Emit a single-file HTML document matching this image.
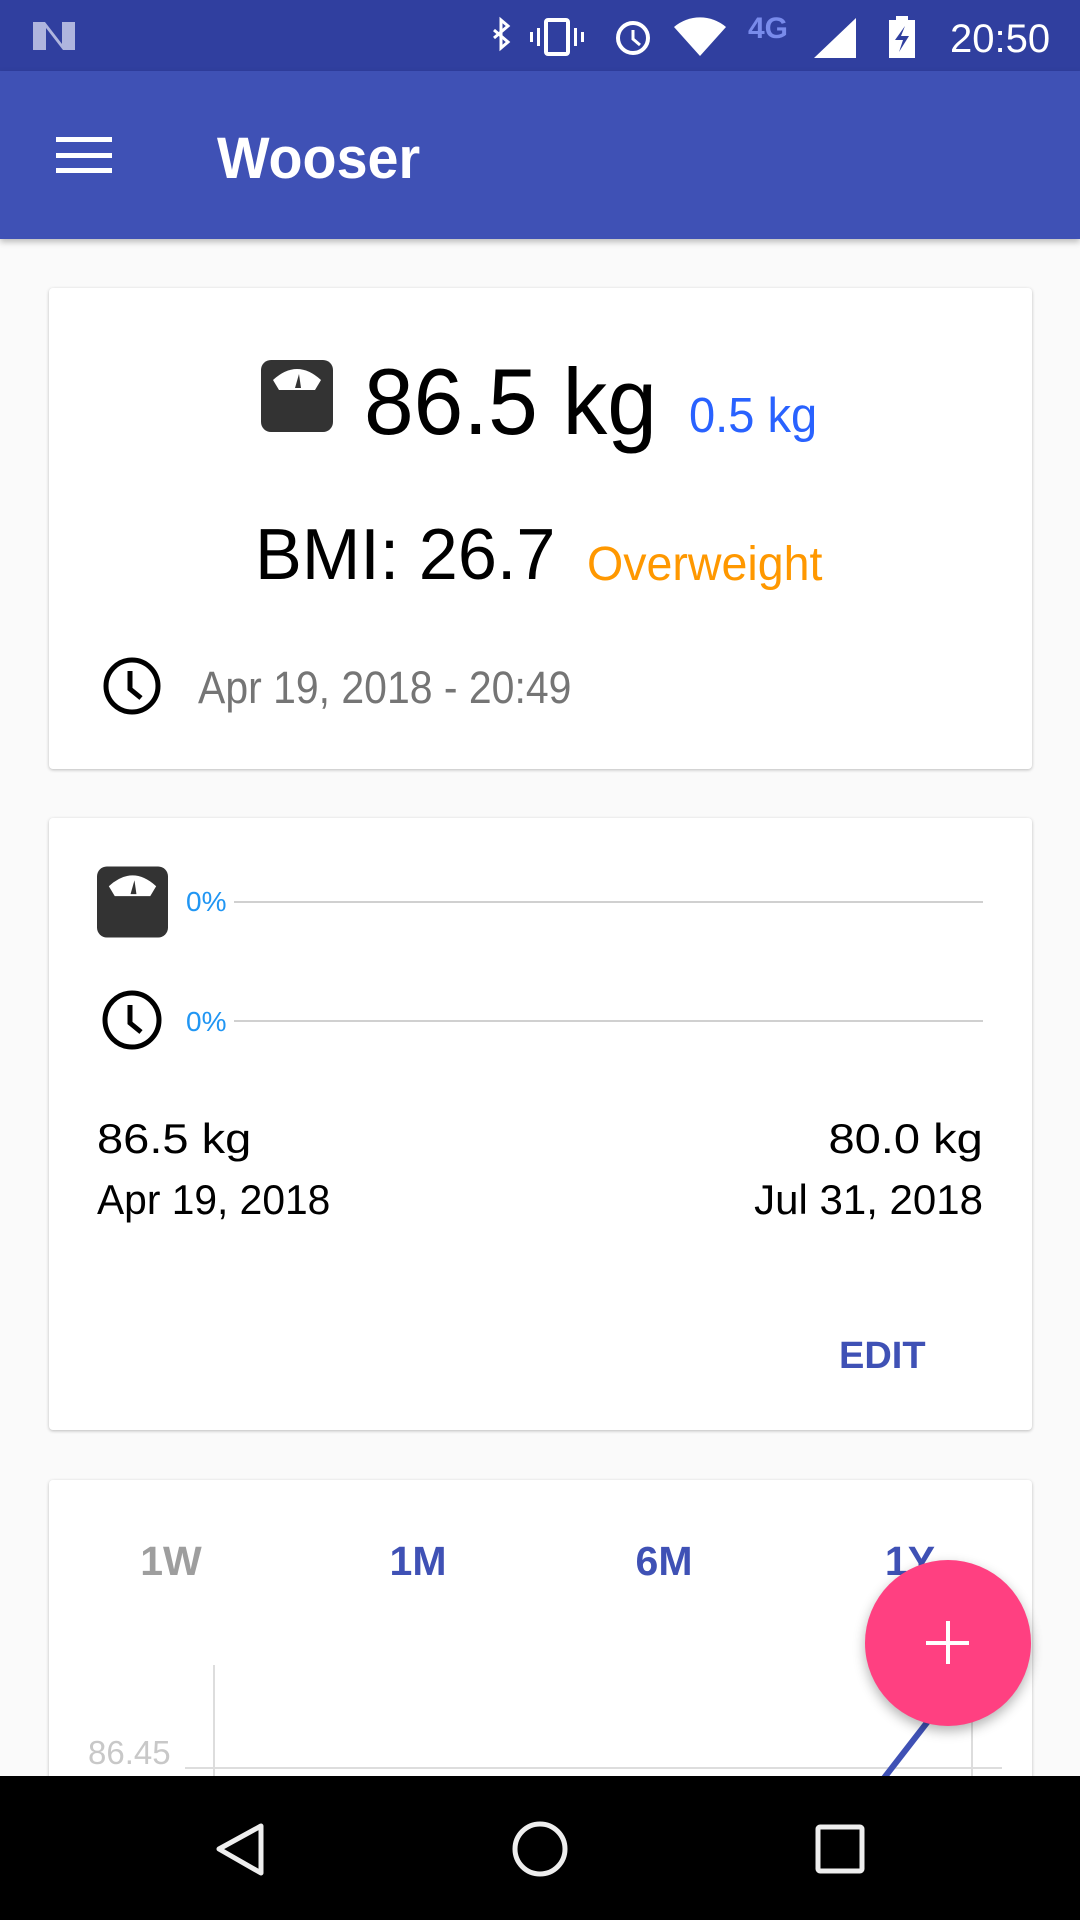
<!DOCTYPE html>
<html><head><meta charset="utf-8"><style>
*{margin:0;padding:0;box-sizing:border-box}
body{width:1080px;height:1920px;position:relative;overflow:hidden;background:#FAFAFA;font-family:"Liberation Sans",sans-serif}
.a{position:absolute;white-space:nowrap}
.card{position:absolute;left:49px;width:983px;background:#fff;border-radius:4px;box-shadow:0 1px 3px rgba(0,0,0,.25)}
</style></head><body>
<div class="a" style="left:0;top:0;width:1080px;height:71px;background:#303F9F"></div>
<div class="a" style="left:0;top:71px;width:1080px;height:168px;background:#3F51B5;box-shadow:0 3px 6px rgba(0,0,0,.25)"></div>
<svg class="a" style="left:0;top:0" width="1080" height="71">
<path d="M33 22 L45 22 L62 44 L62 22 L75 22 L75 50 L63 50 L46 28 L46 50 L33 50Z" fill="#c5cae9" opacity=".85"/>
<path d="M494 30 L508 42 L501 48 L501 20 L508 26 L494 38" stroke="#fff" stroke-width="3" fill="none"/>
<rect x="546" y="20" width="22" height="34" rx="2" stroke="#fff" stroke-width="4" fill="none"/>
<rect x="537" y="28" width="3" height="18" fill="#fff"/><rect x="574" y="28" width="3" height="18" fill="#fff"/>
<rect x="530" y="32" width="3" height="10" fill="#fff"/><rect x="581" y="32" width="3" height="10" fill="#fff"/>
<circle cx="633" cy="38" r="15" stroke="#fff" stroke-width="4" fill="none"/><path d="M633 30 L633 39 L640 45" stroke="#fff" stroke-width="3" fill="none"/>
<path d="M674 27 A40 40 0 0 1 726 27 L700 56Z" fill="#fff"/>
<text x="748" y="38" font-size="30" font-weight="bold" fill="#8c9eff" opacity=".8">4G</text>
<path d="M814 58 L856 58 L856 18Z" fill="#fff"/>
<rect x="889" y="20" width="26" height="38" fill="#fff"/><rect x="896" y="16" width="12" height="5" fill="#fff"/>
<path d="M905 26 L895 40 L903 40 L899 52 L909 36 L901 36Z" fill="#303F9F"/>
<text x="950" y="52" font-size="40" fill="#fff">20:50</text>
</svg>
<div class="a" style="left:56px;top:137px;width:56px;height:5px;background:#fff"></div>
<div class="a" style="left:56px;top:153px;width:56px;height:5px;background:#fff"></div>
<div class="a" style="left:56px;top:168px;width:56px;height:5px;background:#fff"></div>
<div class="a" style="left:217px;top:124px;font-size:58px;line-height:70px;color:#fff;font-weight:bold;transform:scaleX(.96);transform-origin:left">Wooser</div>

<div class="card" style="top:288px;height:481px"></div>
<svg class="a" style="left:261px;top:360px" width="72" height="72" viewBox="0 0 72 72"><rect width="72" height="72" rx="10" fill="#333"/><path d="M12 20 Q36 -2 60 20 L54 30 L18 30Z" fill="#fff"/><path d="M38 14 L34 28 L40 28Z" fill="#333"/></svg>
<div class="a" style="left:364px;top:352px;font-size:94px;line-height:100px;color:#000;transform:scaleX(.95);transform-origin:left">86.5 kg</div>
<div class="a" style="left:689px;top:386px;font-size:49px;line-height:60px;color:#2962FF;transform:scaleX(.96);transform-origin:left">0.5 kg</div>
<div class="a" style="left:255px;top:515px;font-size:72px;line-height:80px;color:#000;transform:scaleX(.975);transform-origin:left">BMI: 26.7</div>
<div class="a" style="left:587px;top:535px;font-size:48px;line-height:60px;color:#FF9800;transform:scaleX(.97);transform-origin:left">Overweight</div>
<svg class="a" style="left:101px;top:656px" width="62" height="60"><circle cx="31" cy="30" r="26" stroke="#000" stroke-width="5" fill="none"/><path d="M29 15 L29 33 L40 42" stroke="#000" stroke-width="5" fill="none"/></svg>
<div class="a" style="left:198px;top:660px;font-size:45px;line-height:56px;color:#757575;transform:scaleX(.91);transform-origin:left">Apr 19, 2018 - 20:49</div>

<div class="card" style="top:818px;height:612px"></div>
<svg class="a" style="left:97px;top:866px" width="71" height="72" viewBox="0 0 72 72"><rect width="72" height="72" rx="10" fill="#333"/><path d="M12 20 Q36 -2 60 20 L54 30 L18 30Z" fill="#fff"/><path d="M38 14 L34 28 L40 28Z" fill="#333"/></svg>
<div class="a" style="left:186px;top:886px;font-size:28px;line-height:32px;color:#2196F3">0%</div>
<div class="a" style="left:234px;top:901px;width:749px;height:2px;background:#d0d0d0"></div>
<svg class="a" style="left:101px;top:989px" width="62" height="62"><circle cx="31" cy="31" r="27" stroke="#000" stroke-width="5" fill="none"/><path d="M29 16 L29 34 L40 43" stroke="#000" stroke-width="5" fill="none"/></svg>
<div class="a" style="left:186px;top:1006px;font-size:28px;line-height:32px;color:#2196F3">0%</div>
<div class="a" style="left:234px;top:1020px;width:749px;height:2px;background:#d0d0d0"></div>
<div class="a" style="left:97px;top:1114px;font-size:42px;line-height:50px;color:#000;transform:scaleX(1.12);transform-origin:left">86.5 kg</div>
<div class="a" style="left:97px;top:1175px;font-size:42px;line-height:50px;color:#000;transform:scaleX(.97);transform-origin:left">Apr 19, 2018</div>
<div class="a" style="right:97px;top:1114px;font-size:42px;line-height:50px;color:#000;transform:scaleX(1.12);transform-origin:right">80.0 kg</div>
<div class="a" style="right:97px;top:1175px;font-size:42px;line-height:50px;color:#000">Jul 31, 2018</div>
<div class="a" style="left:839px;top:1333px;font-size:38px;line-height:46px;color:#3F51B5;font-weight:bold">EDIT</div>

<div class="card" style="top:1480px;height:400px"></div>
<div class="a" style="left:121px;width:100px;text-align:center;top:1536px;font-size:41px;line-height:50px;color:#9E9E9E;font-weight:bold">1W</div>
<div class="a" style="left:368px;width:100px;text-align:center;top:1536px;font-size:41px;line-height:50px;color:#3F51B5;font-weight:bold">1M</div>
<div class="a" style="left:614px;width:100px;text-align:center;top:1536px;font-size:41px;line-height:50px;color:#3F51B5;font-weight:bold">6M</div>
<div class="a" style="left:860px;width:100px;text-align:center;top:1536px;font-size:41px;line-height:50px;color:#3F51B5;font-weight:bold">1Y</div>
<div class="a" style="left:213px;top:1665px;width:2px;height:120px;background:#ddd"></div>
<div class="a" style="left:971px;top:1665px;width:2px;height:120px;background:#ddd"></div>
<div class="a" style="left:185px;top:1767px;width:817px;height:2px;background:#ddd"></div>
<div class="a" style="left:88px;top:1733px;font-size:33px;line-height:40px;color:#c8c8c8">86.45</div>
<svg class="a" style="left:0;top:1600px" width="1080" height="200"><line x1="884" y1="178" x2="960" y2="80" stroke="#3F51B5" stroke-width="6"/></svg>
<div class="a" style="left:865px;top:1560px;width:166px;height:166px;border-radius:50%;background:#FF4081;box-shadow:0 5px 12px rgba(0,0,0,.3)"></div>
<div class="a" style="left:926px;top:1641px;width:43px;height:4px;background:#fff"></div>
<div class="a" style="left:946px;top:1621px;width:4px;height:43px;background:#fff"></div>

<div class="a" style="left:0;top:1776px;width:1080px;height:144px;background:#000"></div>
<svg class="a" style="left:0;top:1776px" width="1080" height="144">
<path d="M261 50 L219 73 L261 97Z" stroke="#eee" stroke-width="5" fill="none" stroke-linejoin="round"/>
<circle cx="540" cy="73" r="25" stroke="#eee" stroke-width="5" fill="none"/>
<rect x="818" y="51" width="44" height="44" rx="2" stroke="#eee" stroke-width="5" fill="none"/>
</svg>
</body></html>
